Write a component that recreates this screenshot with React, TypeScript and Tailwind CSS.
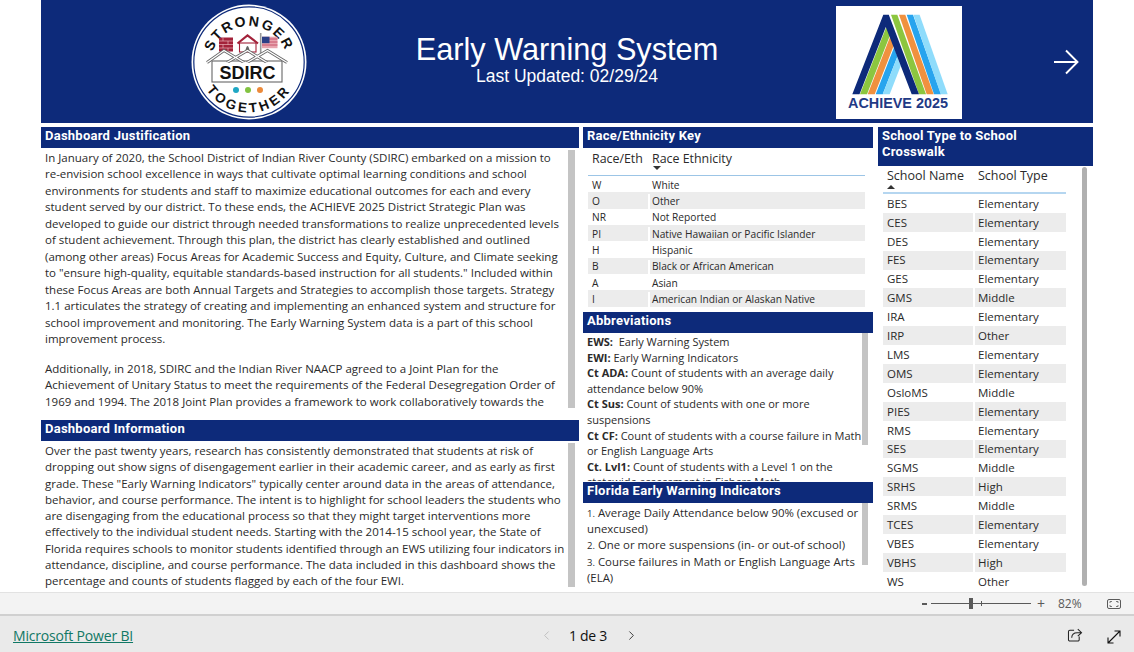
import { ChevronLeft, ChevronRight } from 'lucide-react';

const NAVY = 'bg-[#0d2a7a]';

const justification = [
  'In January of 2020, the School District of Indian River County (SDIRC) embarked on a mission to',
  're-envision school excellence in ways that cultivate optimal learning conditions and school',
  'environments for students and staff to maximize educational outcomes for each and every',
  'student served by our district. To these ends, the ACHIEVE 2025 District Strategic Plan was',
  'developed to guide our district through needed transformations to realize unprecedented levels',
  'of student achievement. Through this plan, the district has clearly established and outlined',
  '(among other areas) Focus Areas for Academic Success and Equity, Culture, and Climate seeking',
  'to "ensure high-quality, equitable standards-based instruction for all students." Included within',
  'these Focus Areas are both Annual Targets and Strategies to accomplish those targets. Strategy',
  '1.1 articulates the strategy of creating and implementing an enhanced system and structure for',
  'school improvement and monitoring. The Early Warning System data is a part of this school',
  'improvement process.',
];

const justification2 = [
  'Additionally, in 2018, SDIRC and the Indian River NAACP agreed to a Joint Plan for the',
  'Achievement of Unitary Status to meet the requirements of the Federal Desegregation Order of',
  '1969 and 1994. The 2018 Joint Plan provides a framework to work collaboratively towards the',
];

const information = [
  'Over the past twenty years, research has consistently demonstrated that students at risk of',
  'dropping out show signs of disengagement earlier in their academic career, and as early as first',
  'grade. These "Early Warning Indicators" typically center around data in the areas of attendance,',
  'behavior, and course performance. The intent is to highlight for school leaders the students who',
  'are disengaging from the educational process so that they might target interventions more',
  'effectively to the individual student needs. Starting with the 2014-15 school year, the State of',
  'Florida requires schools to monitor students identified through an EWS utilizing four indicators in',
  'attendance, discipline, and course performance. The data included in this dashboard shows the',
  'percentage and counts of students flagged by each of the four EWI.',
];

const races = [
  ['W', 'White'],
  ['O', 'Other'],
  ['NR', 'Not Reported'],
  ['PI', 'Native Hawaiian or Pacific Islander'],
  ['H', 'Hispanic'],
  ['B', 'Black or African American'],
  ['A', 'Asian'],
  ['I', 'American Indian or Alaskan Native'],
];

const schools = [
  ['BES', 'Elementary'],
  ['CES', 'Elementary'],
  ['DES', 'Elementary'],
  ['FES', 'Elementary'],
  ['GES', 'Elementary'],
  ['GMS', 'Middle'],
  ['IRA', 'Elementary'],
  ['IRP', 'Other'],
  ['LMS', 'Elementary'],
  ['OMS', 'Elementary'],
  ['OsloMS', 'Middle'],
  ['PIES', 'Elementary'],
  ['RMS', 'Elementary'],
  ['SES', 'Elementary'],
  ['SGMS', 'Middle'],
  ['SRHS', 'High'],
  ['SRMS', 'Middle'],
  ['TCES', 'Elementary'],
  ['VBES', 'Elementary'],
  ['VBHS', 'High'],
  ['WS', 'Other'],
];

function SectionHeader({ children, className = '' }: { children: React.ReactNode; className?: string }) {
  return (
    <div className={`${NAVY} px-[4px] text-white font-bold text-[13px] leading-[16px] tracking-[0.25px] font-['Roboto',sans-serif] ${className}`}>
      {children}
    </div>
  );
}

function StrongerLogo() {
  return (
    <svg width="118" height="118" viewBox="0 0 118 118" className="shrink-0 mt-[1px]">
      <circle cx="59" cy="59" r="57.5" fill="#fff" />
      <circle cx="59" cy="59" r="55.2" fill="none" stroke="#0d2a7a" strokeWidth="1.2" />
      <defs>
        <path id="topArc" d="M 20 62 A 39 39 0 0 1 98 62" />
        <path id="bottomArc" d="M 8.5 59 A 50.5 50.5 0 0 0 109.5 59" />
      </defs>
      <text fontFamily="Liberation Sans, sans-serif" fontWeight="700" fontSize="14" fill="#111" letterSpacing="2">
        <textPath href="#topArc" startOffset="50%" textAnchor="middle">STRONGER</textPath>
      </text>
      <text fontFamily="Liberation Sans, sans-serif" fontWeight="700" fontSize="13.5" fill="#111" letterSpacing="3.2">
        <textPath href="#bottomArc" startOffset="50%" textAnchor="middle">TOGETHER</textPath>
      </text>
      {/* chimney */}
      <rect x="29" y="34.5" width="14" height="14" fill="#a3223a" />
      <path d="M29 38h14M29 41.5h14M29 45h14M33 34.5v3.5M38 38v3.5M33 41.5v3.5M38 45v3.5" stroke="#f3c9cf" strokeWidth="0.6" />
      {/* schoolhouse */}
      <path d="M47.5 40.5 L57.5 32.5 L68 40.5" fill="none" stroke="#a3223a" strokeWidth="2.2" />
      <rect x="49.5" y="40" width="16.5" height="9" fill="#fff" stroke="#a3223a" strokeWidth="1.1" />
      <path d="M55.5 47 q2 -8 4 0 z" fill="#666" />
      {/* flag */}
      <path d="M70.7 30v22" stroke="#999" strokeWidth="1.6" />
      <rect x="72" y="33.7" width="15.5" height="11.5" fill="#e8a6b0" />
      <path d="M72 36h15.5M72 39h15.5M72 42h15.5" stroke="#c0405a" strokeWidth="0.8" />
      <rect x="72" y="33.7" width="7.5" height="6.5" fill="#2c3f86" />
      {/* three houses */}
      <rect x="22" y="58" width="70" height="21" fill="#fff" stroke="#666" strokeWidth="1.1" />
      <path d="M17 59.5 L34 47.5 L54 59.5 M37 59.5 L57.5 47.5 L77 59.5 M57 59.5 L77.5 47.5 L97 59.5" fill="none" stroke="#666" strokeWidth="3" />
      <path d="M17 59.5 L34 47.5 L54 59.5 M37 59.5 L57.5 47.5 L77 59.5 M57 59.5 L77.5 47.5 L97 59.5" fill="none" stroke="#fff" strokeWidth="1.4" />
      <rect x="27" y="60" width="60" height="18" fill="#fff" />
      <text x="57.5" y="75.5" textAnchor="middle" fontFamily="Liberation Sans, sans-serif" fontWeight="700" fontSize="18" fill="#111">SDIRC</text>
      <circle cx="46" cy="87" r="3" fill="#1fa7c4" />
      <circle cx="58" cy="87" r="3" fill="#82c341" />
      <circle cx="70" cy="87" r="3" fill="#ec8a3a" />
    </svg>
  );
}

function AchieveLogo() {
  const bottom = 88.3;
  const top = 8.7;
  const legs = [
    { c: '#8cc63f', tl: 55, bl: 83, lb: 24 },
    { c: '#f0913f', tl: 63, bl: 90.7, lb: 31.7 },
    { c: '#27a4ee', tl: 70.7, bl: 98, lb: 39.7 },
    { c: '#8fdcfb', tl: 77.3, bl: 104.7, lb: 46.7 },
  ];
  const tip = (x: number) => {
    const y = (x - 8.97) / 0.745;
    return `${(x + (bottom - y) * 0.39).toFixed(1)},${y.toFixed(1)}`;
  };
  return (
    <div className="w-[126px] h-[113px] bg-white relative shrink-0 mt-[1px]">
      <svg width="126" height="113" viewBox="0 0 126 113" className="block">
        {legs.map((l) => (
          <g key={l.c} fill={l.c}>
            <polygon points={`${l.lb},${bottom} ${l.lb + 7},${bottom} ${tip(l.lb + 7)} ${tip(l.lb)}`} />
            <polygon points={`${l.tl},${top} ${l.tl + 6.3},${top} ${l.bl + 7},${bottom} ${l.bl},${bottom}`} />
          </g>
        ))}
        <polygon fill="#0d2a7a" points={`16.3,${bottom} 47.3,${top} 52.8,${top} 83,${bottom} 75.7,${bottom} 49.8,21 23.5,${bottom}`} />
      </svg>
      <div className="absolute left-0 w-[124px] top-[88px] text-center text-[#1f3a85] text-[14.4px] leading-[18px] font-bold font-['Liberation_Sans',sans-serif] whitespace-nowrap">
        ACHIEVE 2025
      </div>
    </div>
  );
}

function Scrollbar({ className }: { className: string }) {
  return <div className={`absolute bg-[#c4c4c4] ${className}`} />;
}

export default function App() {
  return (
    <div className="w-[1134px] h-[652px] overflow-hidden flex flex-col bg-white font-['Open_Sans','Noto_Sans',sans-serif] text-[#2a2a2a]">
      <div className="h-[592px] px-[41px] shrink-0 overflow-hidden">
        {/* banner */}
        <div className={`${NAVY} h-[123px] flex items-center`}>
          <div className="w-[149px] shrink-0" />
          <StrongerLogo />
          <div className="w-[518px] shrink-0 text-center text-white font-['Liberation_Sans',sans-serif] -mt-[5px]">
            <div className="text-[30.7px] leading-[34px]">Early Warning System</div>
            <div className="text-[17.5px] leading-[19px]">Last Updated: 02/29/24</div>
          </div>
          <div className="ml-[10px] shrink-0"><AchieveLogo /></div>
          <svg width="26" height="26" viewBox="0 0 26 26" className="ml-[91px] shrink-0" fill="none" stroke="#fff" strokeWidth="1.9">
            <path d="M1 13H24M13 1.5L24.5 13L13 24.5" />
          </svg>
        </div>

        <div className="flex mt-[4px] h-[465px]">
          {/* left column */}
          <div className="w-[538px] shrink-0 flex flex-col">
            <SectionHeader className="h-[21px] pt-[1px]">Dashboard Justification</SectionHeader>
            <div className="relative h-[271px] mb-[1px] overflow-hidden pl-[4px] pt-[2px] text-[11.5px] leading-[16.45px] whitespace-nowrap">
              {justification.map((l, i) => <div key={i}>{l}</div>)}
              <div className="h-[13.5px]" />
              {justification2.map((l, i) => <div key={i}>{l}</div>)}
              <Scrollbar className="left-[527px] top-[2px] w-[7px] h-[258px]" />
            </div>
            <SectionHeader className="h-[21px] pt-[1px]">Dashboard Information</SectionHeader>
            <div className="relative flex-1 overflow-hidden pl-[4px] pt-[2px] text-[11.5px] leading-[16.25px] whitespace-nowrap">
              {information.map((l, i) => <div key={i}>{l}</div>)}
              <Scrollbar className="left-[527px] top-[2px] w-[7px] h-[144px]" />
            </div>
          </div>

          {/* middle column */}
          <div className="w-[290px] ml-[4px] shrink-0 flex flex-col">
            <SectionHeader className="h-[21px] pt-[1px]">Race/Ethnicity Key</SectionHeader>
            <div className="h-[164px] pl-[5px] pr-[8px] overflow-hidden">
              <div className="h-[28px] border-b border-[#9cc5e6] flex text-[12.4px] leading-[18px] pl-[4px] pt-[2px]">
                <div className="w-[60px]">Race/Eth</div>
                <div>
                  Race Ethnicity
                  <svg width="8" height="4" viewBox="0 0 8 4" className="block ml-[1px] -mt-[2px]"><path d="M0 0h8L4 4z" fill="#333" /></svg>
                </div>
              </div>
              {races.map(([a, b], i) => (
                <div key={a} className={`h-[16.35px] flex items-center text-[10.2px] pl-[4px] pt-[2px] whitespace-nowrap ${i % 2 ? 'bg-[#ececec]' : ''}`}>
                  <div className="w-[56px]">{a}</div>
                  <div className="h-full flex items-center border-l-2 border-white pl-[2px]">{b}</div>
                </div>
              ))}
            </div>
            <SectionHeader className="h-[21px] pt-[1px]">Abbreviations</SectionHeader>
            <div className="relative h-[148px] mb-[1px] overflow-hidden pl-[4px] pt-[1px] text-[11px] leading-[15.6px] whitespace-nowrap">
              <div><b>EWS:</b>&nbsp; Early Warning System</div>
              <div><b>EWI:</b> Early Warning Indicators</div>
              <div><b>Ct ADA:</b> Count of students with an average daily</div>
              <div>attendance below 90%</div>
              <div><b>Ct Sus:</b> Count of students with one or more</div>
              <div>suspensions</div>
              <div><b>Ct CF:</b> Count of students with a course failure in Math</div>
              <div>or English Language Arts</div>
              <div><b>Ct. Lvl1:</b> Count of students with a Level 1 on the</div>
              <div>statewide assessment in Fishers Math</div>
              <Scrollbar className="left-[279px] top-0 w-[6px] h-[112px]" />
            </div>
            <SectionHeader className="h-[21px] pt-[1px]">Florida Early Warning Indicators</SectionHeader>
            <div className="relative flex-1 overflow-hidden pl-[4px] pt-[2px] text-[11.4px] leading-[16.2px] whitespace-nowrap">
              <div className="h-[16.2px]"><span className="text-[9.5px]">1.</span> Average Daily Attendance below 90% (excused or</div>
              <div className="h-[16.2px]">unexcused)</div>
              <div className="h-[16.2px]"><span className="text-[9.5px]">2.</span> One or more suspensions (in- or out-of school)</div>
              <div className="h-[16.2px]"><span className="text-[9.5px]">3.</span> Course failures in Math or English Language Arts</div>
              <div className="h-[16.2px]">(ELA)</div>
              <Scrollbar className="left-[279px] top-0 w-[6px] h-[62px]" />
            </div>
          </div>

          {/* right column */}
          <div className="w-[215px] ml-[5px] shrink-0 flex flex-col relative">
            <SectionHeader className="h-[39px] pt-[1px]">School Type to School<br />Crosswalk</SectionHeader>
            <div className="pl-[5px] w-[188px]">
              <div className="h-[28px] border-b-2 border-[#b5d6f0] flex text-[12.5px] leading-[19px] pl-[4px]">
                <div className="w-[91px]">School Name
                  <svg width="8" height="4" viewBox="0 0 8 4" className="block"><path d="M0 4h8L4 0z" fill="#333" /></svg>
                </div>
                <div>School Type</div>
              </div>
              {schools.map(([a, b], i) => (
                <div key={a} className={`h-[18.9px] flex items-center text-[11.5px] pl-[4px] whitespace-nowrap ${i % 2 ? 'bg-[#ececec]' : ''}`}>
                  <div className="w-[86px]">{a}</div>
                  <div className="h-full flex items-center border-l-2 border-white pl-[3px]">{b}</div>
                </div>
              ))}
            </div>
            <Scrollbar className="left-[204px] top-[40px] w-[5px] h-[419px] rounded-[3px] !bg-[#b0b0b0]" />
          </div>
        </div>
      </div>

      {/* zoom bar */}
      <div className="h-[24px] shrink-0 bg-[#f3f3f3] border-t border-[#e2e2e2] border-b-2 border-b-[#d0d0d0] flex items-center text-[#5a5a5a]">
        <div className="ml-[922px] w-[5px] h-[2px] bg-[#5a5a5a]" />
        <div className="ml-[4px] w-[100px] h-[1px] bg-[#5a5a5a] relative">
          <div className="absolute left-[38px] -top-[5px] w-[4px] h-[11px] bg-[#5a5a5a]" />
          <div className="absolute left-[50px] -top-[2px] w-[1px] h-[5px] bg-[#5a5a5a]" />
        </div>
        <div className="ml-[6px] text-[14px] leading-[14px] w-[9px]">+</div>
        <div className="ml-[12px] text-[12px] leading-[14px]">82%</div>
        <svg width="14" height="10" viewBox="0 0 14 10" className="ml-[25px]" fill="none" stroke="#5a5a5a">
          <rect x="0.5" y="0.5" width="13" height="9" rx="1.5" />
          <path d="M3 4V2.5H5M9 2.5H11V4M11 6V7.5H9M5 7.5H3V6" strokeWidth="0.8" />
        </svg>
      </div>

      {/* footer */}
      <div className="flex-1 bg-[#eaeaea] flex items-center relative text-[#222] pt-[2px]">
        <a className="ml-[13px] text-[14px] underline text-[#117865] font-['Open_Sans',sans-serif] tracking-[-0.18px]">Microsoft Power BI</a>
        <div className="absolute left-[539px] top-0 bottom-0 pt-[2px] flex items-center">
          <ChevronLeft size={15} strokeWidth={1.5} className="text-[#bdbdbd]" />
          <span className="ml-[15px] text-[14px] tracking-[-0.3px] text-[#111]">1 de 3</span>
          <ChevronRight size={15} strokeWidth={1.5} className="ml-[17px] text-[#333]" />
        </div>
        <svg width="16" height="14" viewBox="0 0 16 15" className="absolute left-[1067px] top-[12px]" fill="none" stroke="#222" strokeWidth="1.1">
          <path d="M7 2.5H2.5A1.5 1.5 0 0 0 1 4v8.5A1.5 1.5 0 0 0 2.5 14H11a1.5 1.5 0 0 0 1.5-1.5V9" />
          <path d="M4.5 10.5C4.5 7 7 5 10.5 5H14.5M11 1.2L15 5L11 8.8" />
        </svg>
        <svg width="14" height="14" viewBox="0 0 14 14" className="absolute left-[1107px] top-[14px]" fill="none" stroke="#111" strokeWidth="1.1">
          <path d="M1 13L13 1M7.5 1H13V6.5M1 7.5V13H6.5" />
        </svg>
      </div>
    </div>
  );
}
